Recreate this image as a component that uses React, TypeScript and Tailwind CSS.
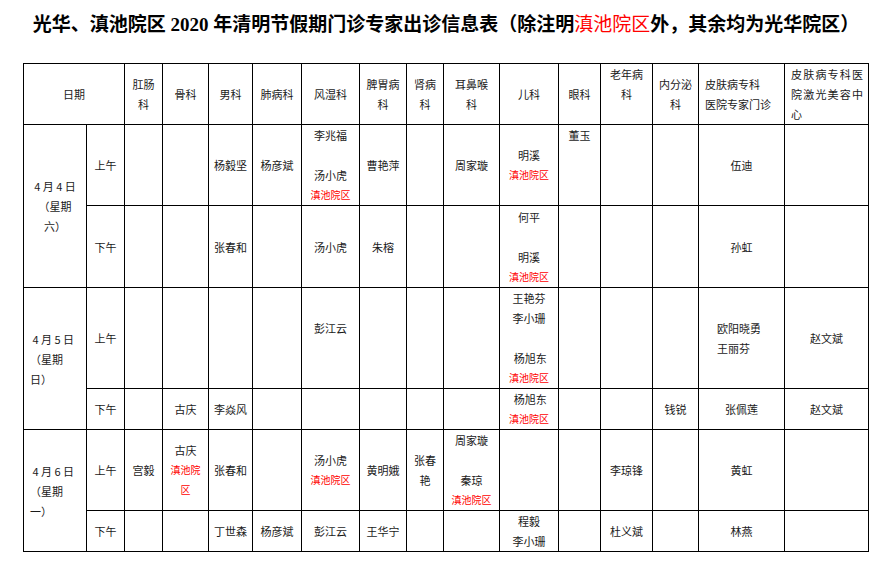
import React from 'react';

type Line = string | { red: string };
type Cell = { lines: Line[]; top?: boolean; left?: boolean };
type Slot = { label: string; h: string; cells: (Line[] | Cell)[] };
type Day = { date: string[]; centered?: boolean; slots: Slot[] };

const R = (t: string) => ({ red: t });
const DC = R('滇池院区');

const widths = [63, 38, 38, 46, 44, 49, 58, 47, 37, 56, 59, 42, 52, 46, 86, 84];

const heads: { lines: string[]; left?: boolean; spaced?: boolean }[] = [
  { lines: ['肛肠', '科'] },
  { lines: ['骨科'] },
  { lines: ['男科'] },
  { lines: ['肺病科'] },
  { lines: ['风湿科'] },
  { lines: ['脾胃病', '科'] },
  { lines: ['肾病', '科'] },
  { lines: ['耳鼻喉', '科'] },
  { lines: ['儿科'] },
  { lines: ['眼科'] },
  { lines: ['老年病', '科', ''] },
  { lines: ['内分泌', '科'] },
  { lines: ['皮肤病专科', '医院专家门诊'], left: true },
  { lines: ['皮肤病专科医', '院激光美容中', '心'], left: true, spaced: true },
];

const days: Day[] = [
  {
    date: ['4 月 4 日', '（星期', '六）'],
    centered: true,
    slots: [
      {
        label: '上午',
        h: 'h-[81px]',
        cells: [
          [], [], ['杨毅坚'], ['杨彦斌'], ['李兆福', '', '汤小虎', DC], ['曹艳萍'], [],
          ['周家璇'], ['明溪', DC], { lines: ['董玉'], top: true }, [], [], ['伍迪'], [],
        ],
      },
      {
        label: '下午',
        h: 'h-[82px]',
        cells: [
          [], [], ['张春和'], [], ['汤小虎'], ['朱榕'], [], [], ['何平', '', '明溪', DC],
          [], [], [], ['孙虹'], [],
        ],
      },
    ],
  },
  {
    date: ['\u00a04 月 5 日', '（星期', '日）'],
    slots: [
      {
        label: '上午',
        h: 'h-[101px]',
        cells: [
          [], [], [], [], ['彭江云', ''], [], [], [],
          ['王艳芬', '李小珊', '', '\u00a0杨旭东', DC], [], [], [],
          { lines: ['欧阳晓勇', '王丽芬'], left: true }, ['赵文斌'],
        ],
      },
      {
        label: '下午',
        h: 'h-[40px]',
        cells: [
          [], ['古庆'], ['李焱风'], [], [], [], [], [], ['\u00a0杨旭东', DC], [], [],
          ['钱锐'], ['张佩莲'], ['赵文斌'],
        ],
      },
    ],
  },
  {
    date: ['\u00a04 月 6 日', '（星期', '一）'],
    slots: [
      {
        label: '上午',
        h: 'h-[81px]',
        cells: [
          ['宫毅'], ['古庆', R('滇池院'), R('区')], ['张春和'], [], ['汤小虎', DC], ['黄明娥'],
          ['张春', '艳'], ['周家璇', '', '秦琼', DC], [], [], ['李琼锋'], [], ['黄虹'], [],
        ],
      },
      {
        label: '下午',
        h: 'h-[41px]',
        cells: [
          [], [], ['丁世森'], ['杨彦斌'], ['彭江云'], ['王华宁'], [], [], ['程毅', '李小珊'],
          [], ['杜义斌'], [], ['林燕'], [],
        ],
      },
    ],
  },
];

const LineView = ({ l }: { l: Line }) => {
  if (typeof l === 'string') {
    return l ? <div className="h-[20px] whitespace-nowrap">{l}</div> : <div className="h-[20px]" />;
  }
  return <div className="h-[20px] whitespace-nowrap text-[10px] text-[#ff0000]">{l.red}</div>;
};

const td = 'border border-black p-0 leading-[20px]';

export default function App() {
  return (
    <div
      className="w-[892px] min-h-[574px] bg-white text-black"
      style={{ fontFamily: '"Liberation Serif", "Noto Sans CJK SC", serif' }}
    >
      <div className="flex h-[50px] items-center justify-center text-[19px] font-bold whitespace-nowrap">
        光华、滇池院区 2020 年清明节假期门诊专家出诊信息表（除注明
        <span className="font-normal text-[#ff0000]">滇池院区</span>
        外，其余均为光华院区）
      </div>
      <table
        className="ml-[23px] mt-[13px] table-fixed border-collapse text-[11px] text-[#1a1a1a]"
        style={{ width: 845, fontFamily: '"Noto Sans CJK SC", sans-serif' }}
      >
        <colgroup>
          {widths.map((w, i) => (
            <col key={i} style={{ width: w }} />
          ))}
        </colgroup>
        <tbody>
          <tr className="h-[61px]">
            <td colSpan={2} className={`${td} text-center align-middle`}>
              日期
            </td>
            {heads.map((h, i) => (
              <td
                key={i}
                className={`${td} align-middle ${h.left ? 'pl-[6px] text-left' : 'text-center'} ${
                  h.spaced ? 'tracking-[1.2px]' : ''
                }`}
              >
                {h.lines.map((l, j) => (
                  <LineView key={j} l={l} />
                ))}
              </td>
            ))}
          </tr>
          {days.map((d, di) =>
            d.slots.map((s, si) => (
              <tr key={`${di}-${si}`} className={s.h}>
                {si === 0 && (
                  <td
                    rowSpan={2}
                    className={`${td} align-middle ${d.centered ? 'text-center' : 'pl-[6px] text-left'}`}
                  >
                    {d.date.map((l, j) => (
                      <LineView key={j} l={l} />
                    ))}
                  </td>
                )}
                <td className={`${td} text-center align-middle`}>{s.label}</td>
                {s.cells.map((c, ci) => {
                  const cell: Cell = Array.isArray(c) ? { lines: c } : c;
                  return (
                    <td
                      key={ci}
                      className={`${td} ${cell.top ? 'align-top' : 'align-middle'} ${
                        cell.left ? 'pl-[18px] text-left' : 'text-center'
                      }`}
                    >
                      {cell.lines.map((l, j) => (
                        <LineView key={j} l={l} />
                      ))}
                    </td>
                  );
                })}
              </tr>
            ))
          )}
        </tbody>
      </table>
    </div>
  );
}
